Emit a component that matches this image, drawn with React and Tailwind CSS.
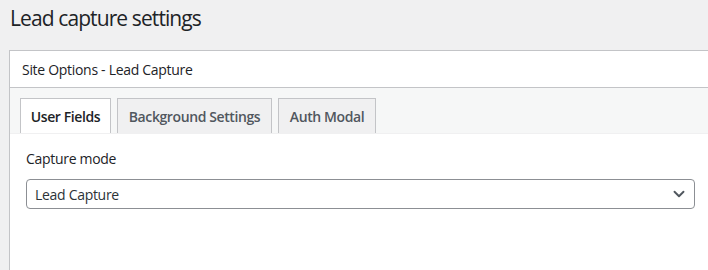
import { ChevronDown } from 'lucide-react';

const tabs = [
  { label: 'User Fields', active: true, w: 'w-[91px]' },
  { label: 'Background Settings', active: false, w: 'w-[155px]' },
  { label: 'Auth Modal', active: false, w: 'w-[98px]' },
];

export default function App() {
  return (
    <div className="h-[270px] w-[708px] overflow-hidden bg-[#f0f0f1] font-['Open_Sans',sans-serif] text-[#1d2327]">
      <h1 className="pl-[10px] pt-[4px] text-[21px] leading-[28px] tracking-[-0.9px] text-[#1d2327]">Lead capture settings</h1>

      {/* Postbox */}
      <div className="mt-[18px] ml-[9px] w-[720px] h-[240px] border border-[#c3c4c7] bg-white">
        <div className="h-[37px] flex items-center pl-[12px] border-b border-[#c3c4c7]">
          <h2 className="text-[14px] font-medium tracking-[-0.3px]">Site Options - Lead Capture</h2>
        </div>

        {/* Tabs */}
        <div className="bg-[#f6f7f7] pt-[10px] pl-[10px] flex gap-[6px] border-b border-[#f0f0f1]">
          {tabs.map(t => (
            <div
              key={t.label}
              className={`${t.w} h-[35px] flex items-center justify-center border border-b-0 border-[#c3c4c7] text-[14px] font-semibold tracking-[-0.4px] ${t.active ? 'bg-white text-[#1d2327]' : 'bg-[#f0f0f1] text-[#50575e]'}`}
            >
              {t.label}
            </div>
          ))}
        </div>

        {/* Content */}
        <div className="pl-[16px] pt-[15px] w-[685px]">
          <label className="block text-[14px] leading-[20px] text-[#1d2327] tracking-[-0.3px]">Capture mode</label>
          <div className="mt-[10px] h-[30px] rounded-[4px] border border-[#8c8f94] flex items-center justify-between pl-[8px] pr-[6px]">
            <span className="text-[14px] text-[#2c3338] tracking-[-0.3px]">Lead Capture</span>
            <ChevronDown className="w-[18px] h-[18px] text-[#50575e]" strokeWidth={2.5} />
          </div>
        </div>
      </div>
    </div>
  );
}
